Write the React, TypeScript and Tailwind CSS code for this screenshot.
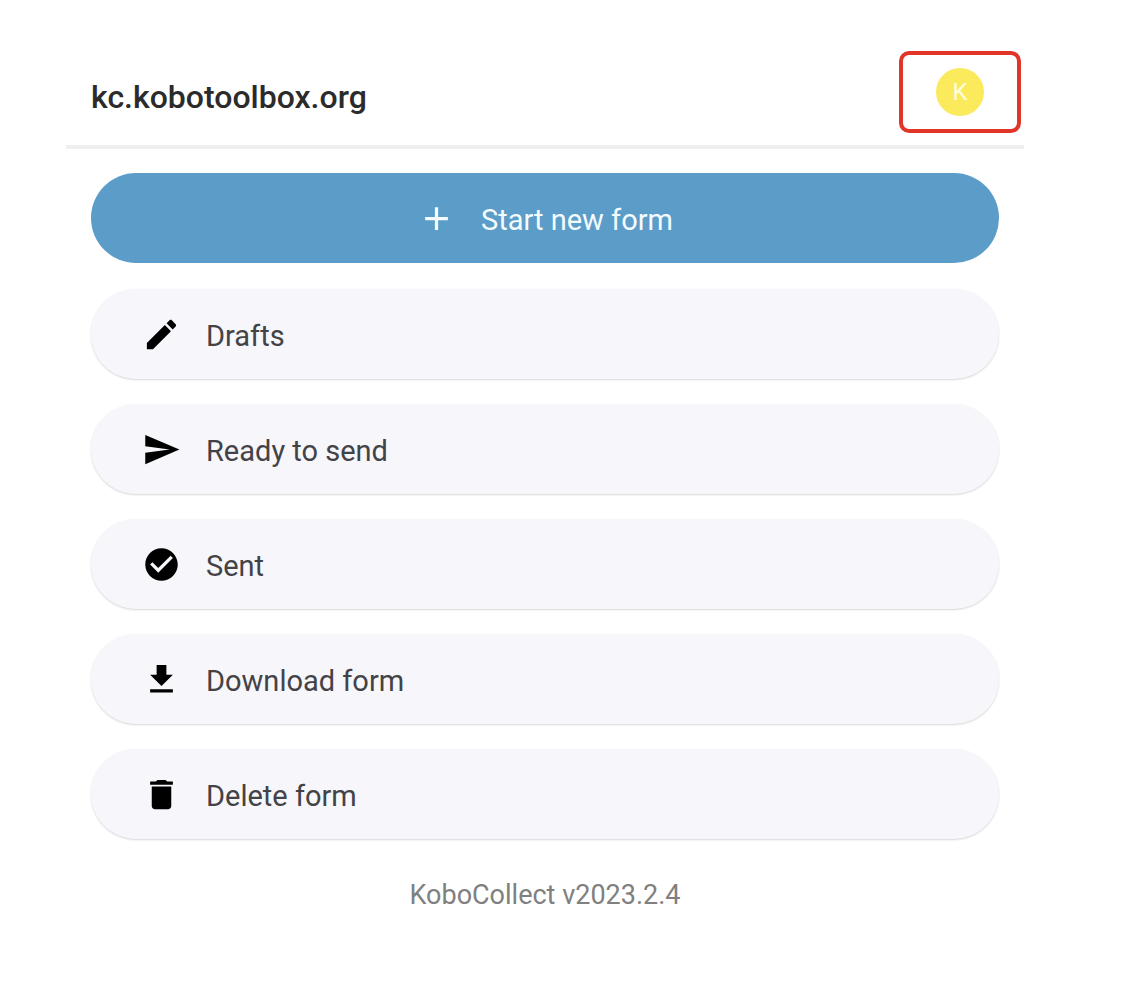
import React from "react";

const icons = {
  add: "M19 13h-6v6h-2v-6H5v-2h6V5h2v6h6v2z",
  edit: "M3 17.25V21h3.75L17.81 9.94l-3.75-3.75L3 17.25zM20.71 7.04c.39-.39.39-1.02 0-1.41l-2.34-2.34c-.39-.39-1.02-.39-1.41 0l-1.83 1.83 3.75 3.75 1.83-1.83z",
  send: "M2.01 21L23 12 2.01 3 2 10l15 2-15 2z",
  check:
    "M12 2C6.48 2 2 6.48 2 12s4.48 10 10 10 10-4.48 10-10S17.52 2 12 2zm-2 15l-5-5 1.41-1.41L10 14.17l7.59-7.59L19 8l-9 9z",
  download: "M19 9h-4V3H9v6H5l7 7 7-7zM5 18v2h14v-2H5z",
  trash:
    "M6 19c0 1.1.9 2 2 2h8c1.1 0 2-.9 2-2V7H6v12zM19 4h-3.5l-1-1h-5l-1 1H5v2h14V4z",
};

type IconName = keyof typeof icons;

function Icon({ name }: { name: IconName }) {
  return (
    <svg viewBox="0 0 24 24" className="size-[39px] shrink-0" fill="currentColor" aria-hidden="true">
      <path d={icons[name]} />
    </svg>
  );
}

const items: { icon: IconName; label: string }[] = [
  { icon: "edit", label: "Drafts" },
  { icon: "send", label: "Ready to send" },
  { icon: "check", label: "Sent" },
  { icon: "download", label: "Download form" },
  { icon: "trash", label: "Delete form" },
];

export default function App() {
  return (
    <div className="min-h-screen bg-white pr-[110px] pl-[66px] font-[Roboto,sans-serif]">
      <header className="flex items-center justify-between border-b-4 border-[#efefef] pt-[51px] pr-[3px] pb-3 pl-[25px]">
        <h1 className="pt-2.5 text-[32px] leading-9 font-medium text-[#2b2b2b]">kc.kobotoolbox.org</h1>
        <button
          type="button"
          aria-label="Account K"
          className="flex h-[82px] w-[122px] items-center justify-center rounded-[10px] border-4 border-[#e2352a]"
        >
          <span className="flex size-12 items-center justify-center rounded-full bg-[#fbea5c] text-2xl text-[#fffde0]">
            K
          </span>
        </button>
      </header>

      <main className="px-[25px] pt-6">
        <button
          type="button"
          className="flex h-[90px] w-full items-center justify-center gap-[25px] rounded-full bg-[#5b9cc8] text-[#f3fbff]"
        >
          <Icon name="add" />
          <span className="pt-1 text-[29px] leading-8">Start new form</span>
        </button>

        <nav className="mt-[26px] flex flex-col gap-[25px]">
          {items.map((item) => (
            <button
              key={item.label}
              type="button"
              className="flex h-[90px] w-full items-center gap-[25px] rounded-full bg-[#f6f6fb] pl-[51px] text-black shadow-[0_1px_2px_rgba(0,0,0,0.16)]"
            >
              <Icon name={item.icon} />
              <span className="pt-1 text-[29px] leading-8 text-[#434347]">{item.label}</span>
            </button>
          ))}
        </nav>
      </main>

      <footer className="pt-10 pb-10 text-center text-[27px] leading-8 text-[#808080]">
        KoboCollect v2023.2.4
      </footer>
    </div>
  );
}
